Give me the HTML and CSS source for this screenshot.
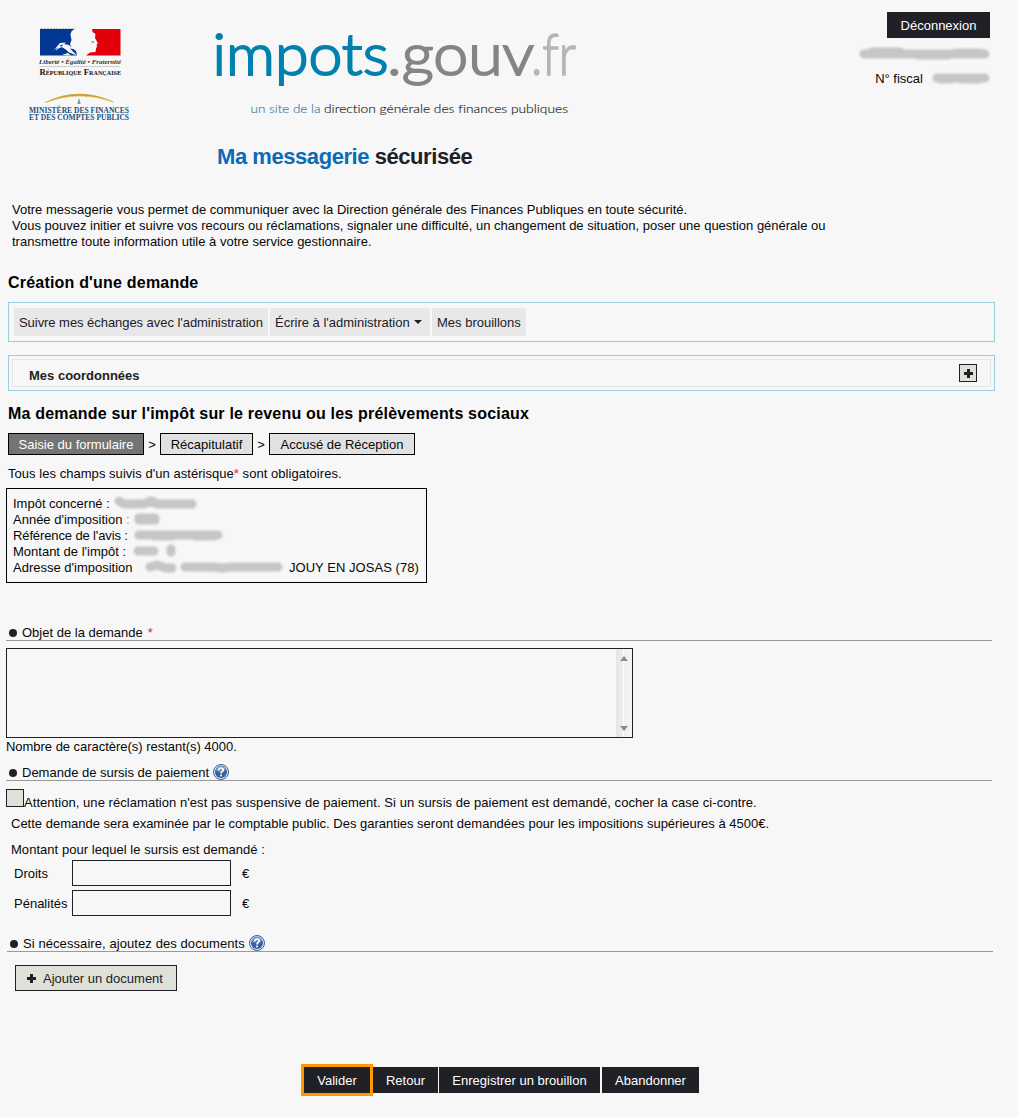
FILE: index.html
```html
<!DOCTYPE html>
<html lang="fr">
<head>
<meta charset="utf-8">
<title>Ma messagerie sécurisée</title>
<link rel="stylesheet" href="styles.css">
</head>
<body>
<svg class="defs" width="0" height="0">
  <symbol id="help" viewBox="0 0 16 16">
    <circle cx="8" cy="8" r="7.5" fill="#dfe9f4" stroke="#3d6096" stroke-width="1"/>
    <circle cx="8" cy="8" r="6" fill="#37629f"/>
    <path d="M3 7a5 5 0 0 1 10-1Q8 9 3 7z" fill="#7397c6"/>
    <path d="M5.7 6.2Q5.8 4 8 4t2.3 2Q10.300 7 9 7.700 8 8.200 8 9.500" fill="none" stroke="#fff" stroke-width="1.700"/>
    <rect x="7.100" y="10.600" width="1.800" height="1.700" fill="#fff"/>
  </symbol>
</svg>
<header class="header">
  <svg class="ministry" width="200" height="136" viewBox="0 0 200 136">
    <path d="M40 29h34.500q-4 2-4 6l1 5-1.500 4 2 4 4 3 1 4.500H40z" fill="#003893"/>
    <path d="M92 29h28.500v26.500H86l4-3 5.500-.5.500-3.500 1-2-.5-2 1.500-1-3-5.500.5-4-3-2z" fill="#e2000b"/>
    <path d="M53 51l7-8 6-.5-2 1.500 5 1 5 4-4-.5 7 7-8-3-5-4-3-1-5 3 1-3z" fill="#f7f7f7"/>
    <path d="M60 46l3-1M61 47l6 4M57 50l3-2" stroke="#003893" fill="none"/>
    <path d="M62 55l6-2 3 2.500z" fill="#f7f7f7"/>
    <path d="M91 41.500h3M92 43l2-.5" stroke="#888" stroke-width=".8"/>
    <path d="M41 28.500h34" stroke="#aaa" stroke-width=".7" stroke-dasharray="2 1"/>
    <text class="motto" x="39" y="64" textLength="82" lengthAdjust="spacingAndGlyphs">Liberté • Égalité • Fraternité</text>
    <path d="M40 66.500h80" stroke="#bbb" stroke-width=".7"/>
    <text class="republic" x="39.500" y="75" textLength="81.500" lengthAdjust="spacingAndGlyphs">République Française</text>
    <path d="M45 102.500Q79 86 113.500 102 79 89.500 45 102.500z" fill="#cf9f1c" stroke="#cf9f1c" stroke-width=".5"/>
    <path d="M79 98l1 3.500.7 2.500h-3.400l.7-2.500z" fill="#7b9b96"/>
    <text class="finance" x="29" y="113" textLength="100" lengthAdjust="spacing">MINISTÈRE DES FINANCES</text>
    <text class="finance" x="29" y="120.300" textLength="100" lengthAdjust="spacing">ET DES COMPTES PUBLICS</text>
  </svg>
  <svg class="brand" width="400" height="136" viewBox="200 0 400 136">
    <text class="logo blue" x="212.500" y="74.500" textLength="176" lengthAdjust="spacingAndGlyphs">impots</text>
    <text class="logo gray" x="387" y="74.500" textLength="147" lengthAdjust="spacingAndGlyphs">.gouv</text>
    <text class="logo light" x="531" y="74.500" textLength="45" lengthAdjust="spacingAndGlyphs">.fr</text>
    <text class="tagline pale" x="250.500" y="113" textLength="70" lengthAdjust="spacingAndGlyphs">un site de la</text>
    <text class="tagline" x="324" y="113" textLength="244" lengthAdjust="spacingAndGlyphs">direction générale des finances publiques</text>
  </svg>
  <div class="account">
    <a class="logout">Déconnexion</a>
    <svg class="masked" width="134" height="16"><path d="M6 8h121M14 6h28M60 9h30M98 7h25"/></svg>
    <div class="fiscal"><span>N° fiscal</span><svg class="masked" width="61" height="14"><path d="M6 7h48M10 8h11M30 8h18"/></svg></div>
  </div>
</header>
<h1><span>Ma messagerie</span> sécurisée</h1>
<main>
  <p class="intro">Votre messagerie vous permet de communiquer avec la Direction générale des Finances Publiques en toute sécurité.<br>Vous pouvez initier et suivre vos recours ou réclamations, signaler une difficulté, un changement de situation, poser une question générale ou<br>transmettre toute information utile à votre service gestionnaire.</p>
  <h2>Création d'une demande</h2>
  <nav class="menu"><a class="m1">Suivre mes échanges avec l'administration</a><a class="m2">Écrire à l'administration<i class="caret"></i></a><a class="m3">Mes brouillons</a></nav>
  <section class="accordion"><div class="accordion-row"><strong>Mes coordonnées</strong><span class="expand"><i class="plus"></i></span></div></section>
  <h2 class="request-title">Ma demande sur l'impôt sur le revenu ou les prélèvements sociaux</h2>
  <div class="steps"><span class="step current">Saisie du formulaire</span><b>&gt;</b><span class="step recap">Récapitulatif</span><b>&gt;</b><span class="step receipt">Accusé de Réception</span></div>
  <p class="note">Tous les champs suivis d'un astérisque<em>*</em> sont obligatoires.</p>
  <section class="summary">
    <div><span>Impôt concerné :</span><svg class="masked r1" width="84" height="14"><path d="M5 5l5 3h20l7-3 7 3h34M12 8h15"/></svg></div>
    <div><span>Année d'imposition <s>:</s></span><svg class="masked r2" width="28" height="14"><path d="M6 6h16M6 8h16"/></svg></div>
    <div><span class="ref">Référence de l'avis :</span><svg class="masked r3" width="90" height="14"><path d="M5 7h79M20 8h18M62 8h18"/></svg></div>
    <div><span>Montant de l'impôt :</span><svg class="masked r4" width="44" height="14"><path d="M5 7h16M38 5v3"/></svg></div>
    <div><span>Adresse d'imposition</span><svg class="masked r5" width="140" height="14"><path d="M5 7l7-2 9 3h6M40 7h28l9 1 9-1h47"/></svg><span class="city">JOUY EN JOSAS (78)</span></div>
  </section>
  <h3 class="subject"><i class="dot"></i><span>Objet de la demande</span><em>*</em></h3>
  <div class="textarea"><div class="scroll"><i class="up"></i><i class="down"></i></div></div>
  <p class="count">Nombre de caractère(s) restant(s) 4000.</p>
  <h3 class="relief"><i class="dot"></i><span>Demande de sursis de paiement</span><svg class="help" width="16" height="16"><use href="#help"/></svg></h3>
  <div class="check"><i class="box"></i><span>Attention, une réclamation n'est pas suspensive de paiement. Si un sursis de paiement est demandé, cocher la case ci-contre.</span></div>
  <p class="examined">Cette demande sera examinée par le comptable public. Des garanties seront demandées pour les impositions supérieures à 4500€.</p>
  <p class="amount">Montant pour lequel le sursis est demandé :</p>
  <div class="field"><span>Droits</span><i class="input"></i><b>€</b></div>
  <div class="field"><span>Pénalités</span><i class="input"></i><b>€</b></div>
  <h3 class="documents"><i class="dot"></i><span>Si nécessaire, ajoutez des documents</span><svg class="help" width="16" height="16"><use href="#help"/></svg></h3>
  <a class="add"><i class="plus"></i><span>Ajouter un document</span></a>
  <footer class="actions"><a class="validate">Valider</a><a class="back">Retour</a><a class="save">Enregistrer un brouillon</a><a class="cancel">Abandonner</a></footer>
</main>
</body>
</html>
```
FILE: styles.css
```css
* { box-sizing: border-box; }
body { margin: 0; width: 1018px; height: 1117px; overflow: hidden; background: #f7f7f7; color: #080808; font: 13px/16px "Liberation Sans", Arial, sans-serif; }
p, h1, h2, h3 { margin: 0; }
a, span, strong, em, b { white-space: nowrap; }
i, em, s { font-style: normal; text-decoration: none; }
b { font-weight: normal; }
em { color: #e3242b; }
s { color: #999; }
.defs { display: block; }
.header { display: flex; height: 136px; }
.header > svg { display: block; flex: none; }
.motto { font: italic bold 7px "Liberation Serif", serif; fill: #333; }
.republic { font: bold 8.5px "Liberation Serif", serif; font-variant: small-caps; fill: #111; }
.finance { font: bold 7.5px "Liberation Serif", serif; fill: #1c4e7c; }
.logo { font: 300 58px Lato, sans-serif; stroke-width: 2; }
.blue { fill: #0081ae; stroke: #0081ae; }
.gray { fill: #858585; stroke: #858585; }
.light { fill: #b5b5b5; stroke: #b5b5b5; stroke-width: 1.5; }
.tagline { font: 300 12px Lato, sans-serif; fill: #222; stroke: #222; stroke-width: .15; font-variant-ligatures: none; }
.tagline.pale { fill: #3c7aa2; stroke: #3c7aa2; }
.account { display: flex; flex-direction: column; align-items: flex-end; margin-left: auto; padding: 12px 26px 0 0; }
.logout { width: 103px; height: 26px; margin-right: 2px; background: #202127; color: #fff; line-height: 27px; text-align: center; }
.account > .masked { margin-top: 8px; }
.fiscal { display: flex; gap: 8px; margin-top: 9px; }
.masked { display: block; flex: none; fill: none; stroke: #b5b5b5; stroke-width: 9px; stroke-linecap: round; stroke-linejoin: round; stroke-opacity: .75; filter: blur(1px); }
h1 { height: 41px; padding-left: 217px; font-size: 22px; line-height: 41px; letter-spacing: -.44px; color: #202127; }
h1 span { color: #0c6bb3; }
main { display: flex; flex-direction: column; align-items: flex-start; width: 1018px; padding: 25px 0 0 6px; }
.intro { margin-left: 6px; white-space: nowrap; letter-spacing: -.005px; }
h2 { margin: 23px 0 0 2px; font-size: 16px; line-height: 20px; letter-spacing: .2px; color: #000; white-space: nowrap; }
.menu { display: flex; gap: 2px; width: 987px; height: 40px; margin: 9px 0 0 2px; padding: 5px; border: 1px solid #9bcbe2; color: #202127; }
.menu a { height: 28px; padding-left: 5px; background: #e8e8e8; line-height: 29px; }
.menu .m1 { width: 254px; letter-spacing: -.05px; }
.menu .m2 { display: flex; align-items: center; width: 160px; }
.m3 { width: 94px; }
.caret { margin-left: 4px; border: 4px solid transparent; border-top: 4px solid #202127; border-bottom: 0; }
.accordion { width: 987px; height: 36px; margin: 13px 0 0 2px; padding: 3px; border: 1px solid #9bcbe2; }
.accordion-row { display: flex; justify-content: space-between; height: 28px; padding: 4px 13px 0 16px; border: 1px solid #e5e5e5; }
.accordion strong { line-height: 24px; color: #222; }
.expand { display: flex; align-items: center; justify-content: center; width: 18px; height: 18px; border: 1px solid #202127; background: #dfe0d8; }
.plus { flex: none; width: 9px; height: 9px; background: linear-gradient(#202127, #202127) center / 3px 9px no-repeat, linear-gradient(#202127, #202127) center / 9px 3px no-repeat; }
.request-title { margin-top: 13px; letter-spacing: .19px; }
.steps { display: flex; margin: 9px 0 0 2px; line-height: 23px; }
.steps b { width: 16px; text-align: center; }
.step { height: 22px; border: 1px solid #000; background: #e1e1e1; line-height: 21px; text-align: center; }
.current { width: 136px; background: #747474; color: #fff; }
.recap { width: 93px; }
.receipt { width: 146px; }
.note { margin: 10px 0 0 2px; letter-spacing: .04px; }
.summary { width: 421px; height: 95px; margin-top: 6px; padding: 7px 0 0 6px; border: 1px solid #000; }
.summary div { display: flex; height: 16px; }
.summary div > span:first-child { width: 120px; }
.summary .ref { letter-spacing: -.12px; }
.r1 { margin-left: -19px; }
.r3 { margin-left: 1px; }
.r5 { margin-left: 12px; }
.city { margin-left: 4px; letter-spacing: .04px; }
h3 { display: flex; width: 986px; height: 17px; border-bottom: 1px solid #999; font-size: 13px; font-weight: normal; line-height: 17px; }
.dot { flex: none; width: 8px; height: 8px; margin: 5px 5px 0 3px; border-radius: 50%; background: #202127; }
.subject { margin-top: 41px; }
.subject em { margin-left: 5px; }
.textarea { display: flex; justify-content: flex-end; width: 627px; height: 90px; margin-top: 7px; border: 1px solid #202127; }
.scroll { display: flex; flex-direction: column; justify-content: space-between; align-items: center; width: 16px; padding: 7px 0 6px; background: linear-gradient(90deg, #e6e6e6, #ececec 7px, #fff 7px, #fff 8px, #f0f0f0 8px, #f5f5f5); }
.up, .down { border: 4px solid transparent; }
.up { border-top: 0; border-bottom: 5px solid #8c8c8c; }
.down { border-bottom: 0; border-top: 5px solid #8c8c8c; }
.count { margin-top: 1px; letter-spacing: -.03px; }
.relief { margin-top: 9px; }
.help { flex: none; margin-left: 4px; }
.check { display: flex; margin-top: 8px; }
.box { width: 18px; height: 18px; border: 1px solid #202127; background: #dfe0d8; }
.check span { padding-top: 6px; letter-spacing: .05px; }
.examined { margin: 4px 0 0 5px; line-height: 17px; }
.amount { margin: 10px 0 0 5px; line-height: 16px; letter-spacing: .04px; }
.field { display: flex; height: 26px; margin: 2px 0 0 8px; line-height: 27px; }
.field + .field { margin-top: 4px; }
.field span { width: 58px; }
.input { width: 159px; height: 26px; border: 1px solid #202127; }
.field b { margin-left: 11px; }
.documents { margin: 19px 0 0 1px; letter-spacing: .08px; }
.add { display: flex; align-items: center; width: 162px; height: 26px; margin: 13px 0 0 9px; padding: 1px 0 0 11px; border: 1px solid #202127; background: #dfe0d8; color: #202127; }
.add span { margin-left: 7px; }
.actions { display: flex; align-items: center; height: 32px; margin: 73px 0 0 295px; color: #fff; line-height: 27px; text-align: center; }
.actions a { height: 26px; background: #202127; }
.actions .validate { width: 72px; height: 32px; border: 3px solid #ff9900; }
.back { width: 65px; margin-right: 1px; }
.save { width: 161px; margin-right: 2px; }
.cancel { width: 97px; }
```
